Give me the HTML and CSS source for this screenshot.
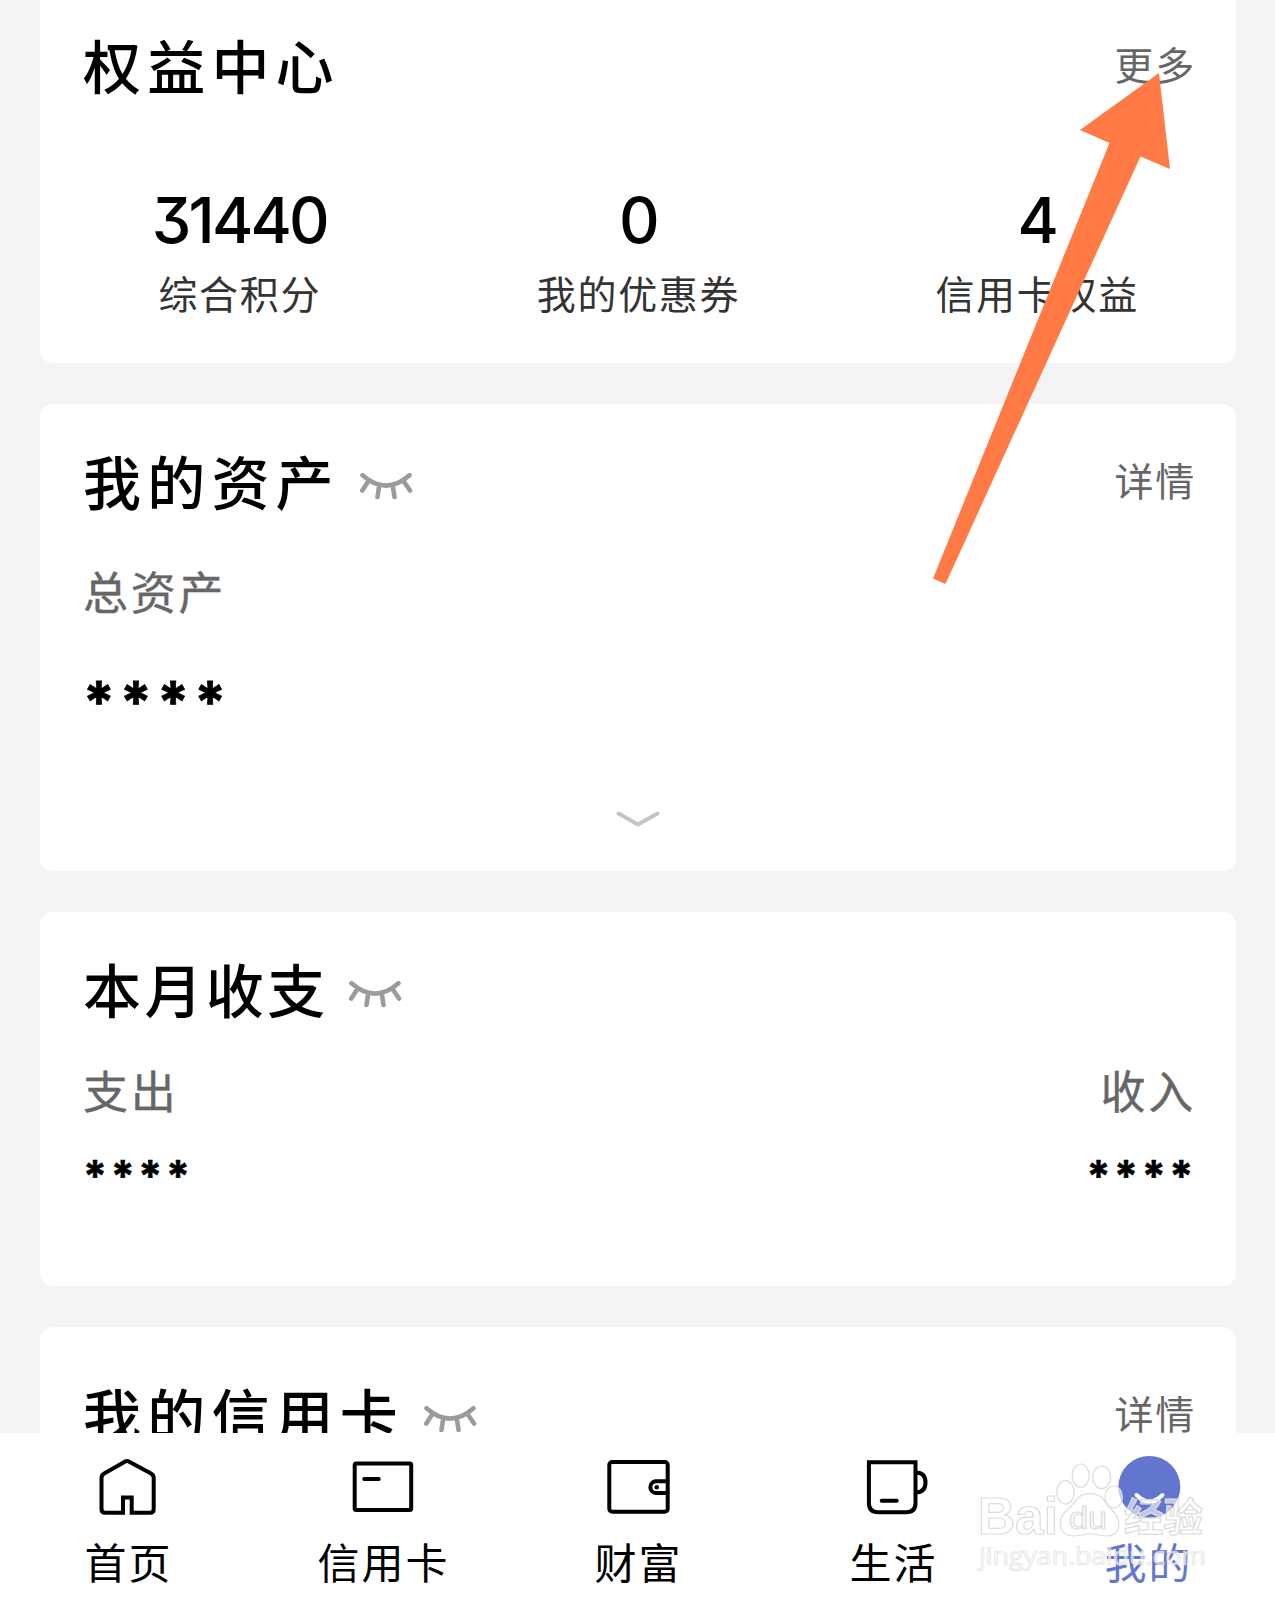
FILE: index.html
```html
<!DOCTYPE html>
<html lang="zh-CN">
<head>
    <meta charset="UTF-8">
    <meta name="viewport" content="width=device-width, initial-scale=1.0">
    <title>我的</title>
    <link rel="stylesheet" href="styles.css">
</head>
<body>
    <!-- closed eye icon, reused in the card titles -->
    <svg width="0" height="0" class="defs">
        <symbol id="eye" viewBox="0 0 54 30">
            <path d="M3.500 5.300Q27 26 50.500 5.300M8.800 12L3.300 20.500M20 17L18.500 27M34 17L35.500 27M45.200 12L51 20.500" fill="none" stroke="#9b9b9b" stroke-width="4.600" stroke-linecap="round"/>
        </symbol>
    </svg>

    <div class="page">
        <main class="content">
            <section class="card benefits">
                <div class="card-header">
                    <h2>权益中心</h2>
                    <a class="more">更多</a>
                </div>
                <div class="stats">
                    <div class="stat">
                        <div class="number">31440</div>
                        <div class="label">综合积分</div>
                    </div>
                    <div class="stat">
                        <div class="number">0</div>
                        <div class="label">我的优惠券</div>
                    </div>
                    <div class="stat">
                        <div class="number">4</div>
                        <div class="label">信用卡权益</div>
                    </div>
                </div>
            </section>

            <section class="card assets">
                <div class="card-header">
                    <h2>我的资产</h2>
                    <svg class="eye"><use href="#eye"/></svg>
                    <a class="more">详情</a>
                </div>
                <div class="sub-title">总资产</div>
                <div class="hidden-amount">****</div>
                <svg class="chevron" viewBox="0 0 44 16">
                    <path d="M2.500 2.500L22 13.500L41.500 2.500" fill="none" stroke="#c4c5c9" stroke-width="4" stroke-linecap="round" stroke-linejoin="round"/>
                </svg>
            </section>

            <section class="card monthly">
                <div class="card-header">
                    <h2>本月收支</h2>
                    <svg class="eye"><use href="#eye"/></svg>
                </div>
                <div class="flows">
                    <div class="flow">
                        <div class="sub-title">支出</div>
                        <div class="hidden-amount small">****</div>
                    </div>
                    <div class="flow right">
                        <div class="sub-title">收入</div>
                        <div class="hidden-amount small">****</div>
                    </div>
                </div>
            </section>

            <section class="card credit">
                <div class="card-header">
                    <h2>我的信用卡</h2>
                    <svg class="eye"><use href="#eye"/></svg>
                    <a class="more">详情</a>
                </div>
            </section>
        </main>

        <nav class="tab-bar">
            <a class="tab">
                <svg viewBox="0.8 0 64 64">
                    <path d="M27.800 57.800H10Q6.300 57.800 6.300 54V23Q6.300 20 9 18.500L30 6.500Q31.800 5.500 33.600 6.500L55.800 18.500Q58.500 20 58.500 23V54Q58.500 57.800 55 57.800H36.500V42.500H27.800Z"/>
                </svg>
                <span>首页</span>
            </a>
            <a class="tab">
                <svg viewBox="0.8 0 64 64">
                    <rect x="4.500" y="8.500" width="56.500" height="46.500" rx="1.500"/>
                    <path d="M14 24H28.500"/>
                </svg>
                <span>信用卡</span>
            </a>
            <a class="tab">
                <svg viewBox="0.5 0 64 64">
                    <rect x="3.800" y="7" width="58.400" height="49.700" rx="3"/>
                    <path d="M62 26.300H50A5.900 5.900 0 0 0 50 38H62"/>
                    <circle cx="51.200" cy="32.200" r="2.300" fill="#000" stroke="none"/>
                </svg>
                <span>财富</span>
            </a>
            <a class="tab">
                <svg viewBox="0.3 0 64 64">
                    <path d="M8.200 7.300H54.800V48Q54.800 57.300 45.500 57.300H17.500Q8.200 57.300 8.200 48Z"/>
                    <path d="M55 17.500Q64.800 17.500 64.800 27.600Q64.800 37.500 55 37.500M21 45.700H36"/>
                </svg>
                <span>生活</span>
            </a>
            <a class="tab active">
                <svg viewBox="0 0 64 64">
                    <circle cx="33.300" cy="32" r="31" fill="#6275cf" stroke="none"/>
                    <path d="M20.500 40Q33.500 53 46.500 40" stroke="#fff" stroke-linecap="round"/>
                </svg>
                <span>我的</span>
            </a>
        </nav>

        <svg class="arrow" viewBox="0 0 240 514">
            <path d="M227 2L148 59L177.500 72L1 507.500L13.500 513L208.500 85.500L238 98Z" fill="#ff7a45"/>
        </svg>

        <svg class="watermark" viewBox="0 0 240 130">
            <g class="paw">
                <ellipse cx="90.500" cy="42.300" rx="8.700" ry="11.700"/>
                <ellipse cx="105.700" cy="25.700" rx="8.500" ry="11.700"/>
                <ellipse cx="126.700" cy="27.300" rx="9" ry="11.300"/>
                <ellipse cx="138.700" cy="47" rx="8.700" ry="11"/>
                <path d="M115 43.500C102 43.500 101 53 93 59C80 70 84 86 98 86C105 86 108 84 115 84C122 84 125 86 132 86C145 86 148 71 137 60C129 53 128 43.500 115 43.500Z"/>
            </g>
            <text class="brand" x="3" y="84" font-size="52" textLength="80" lengthAdjust="spacingAndGlyphs">Bai</text>
            <text class="brand du" x="94" y="79" font-size="31" textLength="38" lengthAdjust="spacingAndGlyphs">du</text>
            <text class="brand cn" x="149" y="81" font-size="39" textLength="79" lengthAdjust="spacingAndGlyphs">经验</text>
            <text class="url" x="4" y="115" font-size="26" textLength="227" lengthAdjust="spacingAndGlyphs">jingyan.baidu.com</text>
        </svg>
    </div>
</body>
</html>
```

FILE: styles.css
```css
* {
    box-sizing: border-box;
}
body {
    margin: 0;
    background-color: #f4f4f7;
    color: #000;
    font-family: "Noto Sans CJK SC", sans-serif;
}
.defs {
    display: block;
}
.page {
    position: relative;
    display: flex;
    flex-direction: column;
    height: 1600px;
    overflow: hidden;
}
.content {
    flex: 1;
    min-height: 0;
    padding: 0 39px 0 40px;
    display: flex;
    flex-direction: column;
    gap: 41px;
    overflow: hidden;
}
.card {
    flex: none;
    padding: 0 43px;
    background-color: #fff;
    border-radius: 13px;
}
.card-header {
    display: flex;
    align-items: center;
    height: 150px;
}
h2 {
    margin: 0;
    padding-top: 1px;
    font-size: 58px;
    font-weight: 500;
    line-height: 80px;
    letter-spacing: 6.2px;
}
.more {
    margin: 0 -3px 0 auto;
    color: #666;
    font-size: 39px;
    line-height: 50px;
    letter-spacing: 1.7px;
}
.eye {
    width: 54px;
    height: 30px;
    margin: 12px 0 0 19px;
}

.benefits {
    height: 363px;
    border-radius: 0 0 13px 13px;
}
.benefits .card-header {
    height: 126px;
}
.stats {
    display: grid;
    grid-template-columns: repeat(3, 1fr);
    margin: 54px -43px 0;
    text-align: center;
}
.number {
    font-family: Inter, Roboto, sans-serif;
    font-feature-settings: "cv09";
    font-size: 63px;
    font-weight: 500;
    line-height: 80px;
    letter-spacing: -2.8px;
}
.label {
    margin-top: 7px;
    padding-left: 1px;
    color: #333;
    font-size: 39px;
    line-height: 50px;
    letter-spacing: 1.7px;
}

.assets {
    height: 467px;
}
.sub-title {
    color: #666;
    font-size: 45px;
    line-height: 60px;
    letter-spacing: 2.7px;
    -webkit-text-stroke: 0.4px #666;
}
.assets .sub-title {
    margin-top: 7px;
}
.hidden-amount {
    margin-top: 41px;
    height: 60px;
    font-family: Inter, sans-serif;
    font-size: 57px;
    font-weight: 700;
    line-height: 80px;
    letter-spacing: 5.2px;
    -webkit-text-stroke: 0.8px #000;
}
.chevron {
    display: block;
    width: 44px;
    height: 16px;
    margin: 89px auto 0;
}

.monthly {
    height: 374px;
}
.monthly h2 {
    letter-spacing: 3.4px;
}
.flows {
    display: flex;
    justify-content: space-between;
    margin-top: -2px;
}
.right {
    margin-right: -3px;
    text-align: right;
}
.right .hidden-amount {
    margin-right: -1px;
}
.hidden-amount.small {
    margin-top: 25px;
    font-size: 43px;
    line-height: 60px;
    letter-spacing: 3.6px;
    -webkit-text-stroke: 0.6px #000;
}

.credit {
    height: 200px;
}
.credit .card-header {
    height: 170px;
}

.tab-bar {
    flex: none;
    display: flex;
    height: 167px;
    background-color: #fff;
}
.tab {
    flex: 1;
    display: flex;
    flex-direction: column;
    align-items: center;
    padding-top: 22px;
    font-size: 42px;
    line-height: 60px;
    letter-spacing: 2px;
}
.tab span {
    padding-left: 2px;
}
.tab svg {
    width: 64px;
    height: 64px;
    margin-bottom: 12px;
    overflow: visible;
    fill: none;
    stroke: #000;
    stroke-width: 4;
    stroke-linecap: round;
}
.tab.active {
    color: #6275cf;
}

.arrow {
    position: absolute;
    left: 932px;
    top: 71px;
    width: 240px;
    height: 514px;
}
.watermark {
    position: absolute;
    left: 975px;
    top: 1450px;
    width: 240px;
    height: 130px;
    overflow: visible;
}
.paw,
.brand {
    fill: rgba(255, 255, 255, 0.6);
    stroke: #dcdcdc;
    stroke-width: 1.2;
}
.brand {
    font-family: "Liberation Sans", sans-serif;
    font-weight: 700;
}
.brand.du {
    font-weight: 400;
}
.brand.cn {
    font-family: "Noto Sans CJK SC", sans-serif;
}
.url {
    font-family: "Open Sans", sans-serif;
    fill: rgba(255, 255, 255, 0.6);
    stroke: #dedede;
    stroke-width: 0.7;
}
```
